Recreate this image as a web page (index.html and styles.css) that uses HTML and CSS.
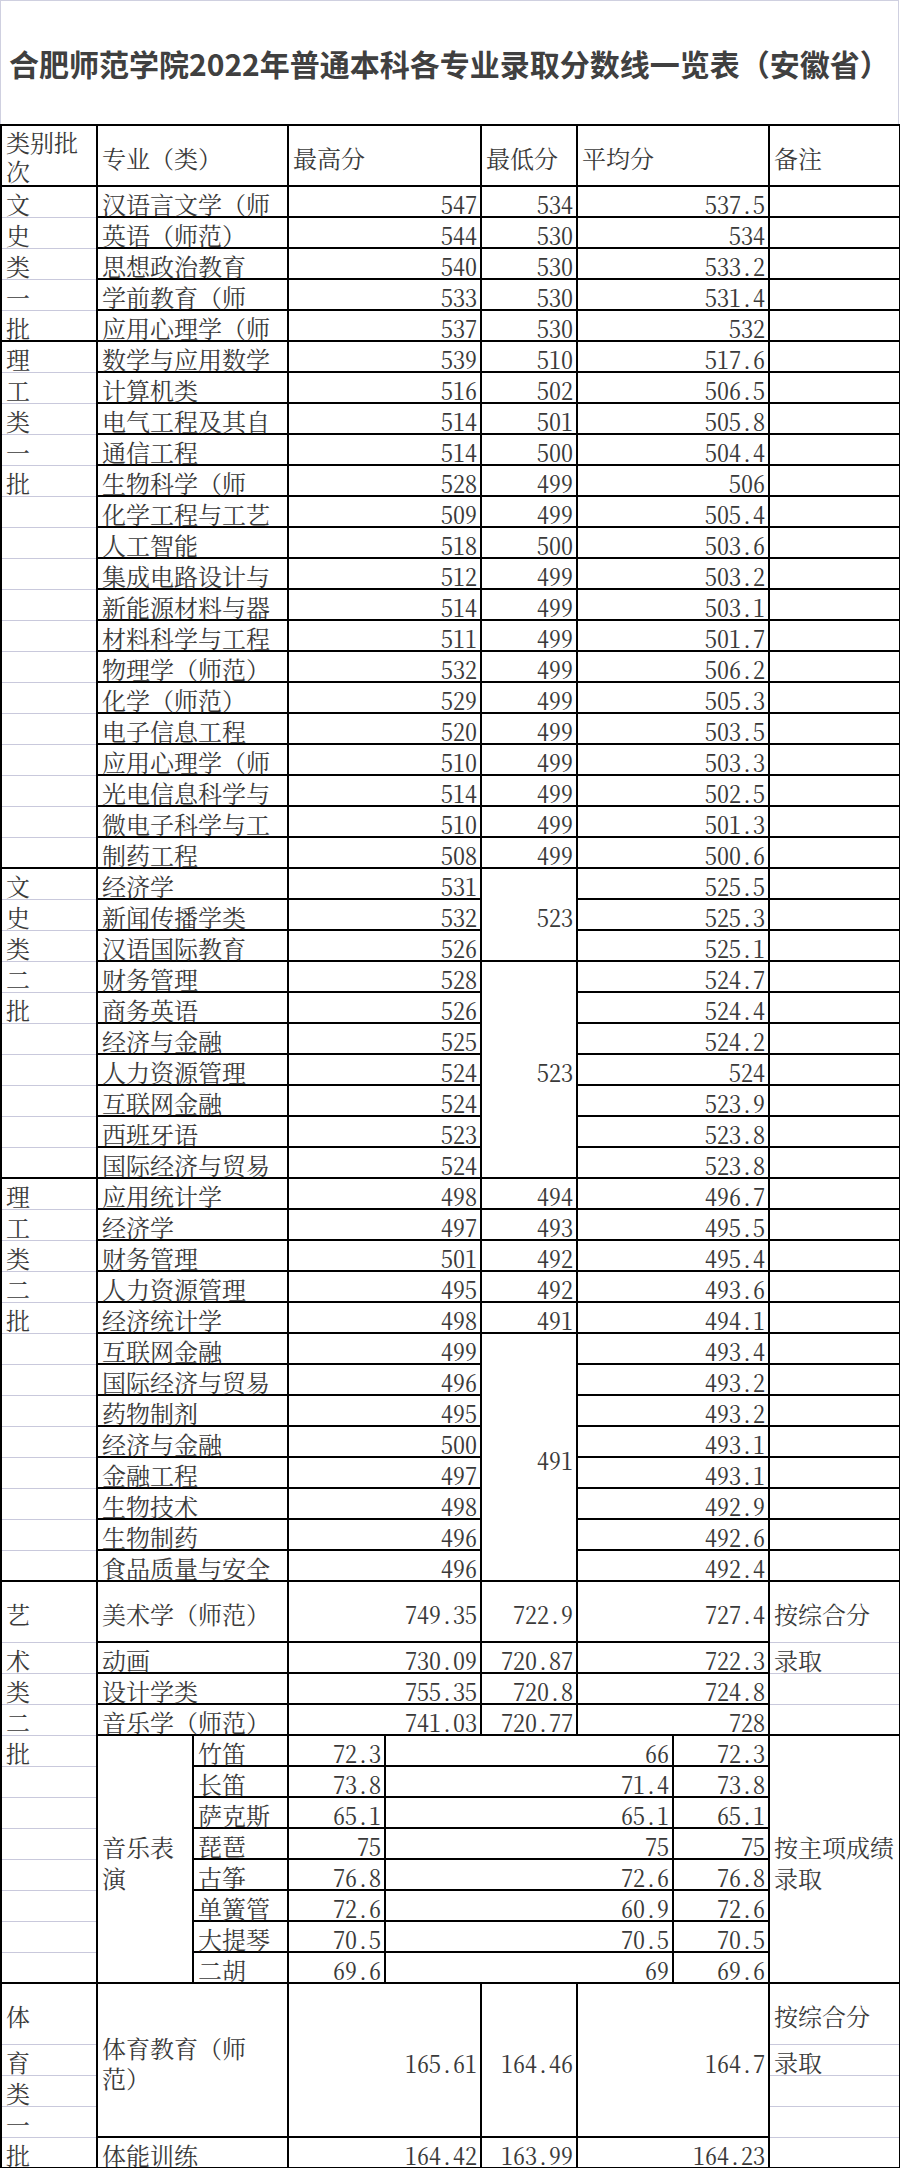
FILE: index.html
```html
<!DOCTYPE html>
<html lang="zh-CN">
<head>
<meta charset="utf-8">
<title>合肥师范学院2022年普通本科各专业录取分数线一览表（安徽省）</title>
<link rel="stylesheet" href="styles.css">
</head>
<body>
<div class="title">合肥师范学院2022年普通本科各专业录取分数线一览表（安徽省）</div>
<table class="sheet">
<colgroup>
<col class="c96"><col class="c96"><col class="c95"><col class="c97"><col class="c96"><col class="c96"><col class="c96"><col class="c96"><col class="c131">
</colgroup>
<tbody>
<tr class="tall head"><td class="wrap2">类别批次</td><td colspan="2">专业（类）</td><td colspan="2">最高分</td><td>最低分</td><td colspan="2">平均分</td><td>备注</td></tr>

<tr><td class="a g">文</td><td colspan="2">汉语言文学（师</td><td colspan="2" class="n">547</td><td class="n">534</td><td colspan="2" class="n">537.5</td><td></td></tr>
<tr><td class="a">史</td><td colspan="2">英语（师范）</td><td colspan="2" class="n">544</td><td class="n">530</td><td colspan="2" class="n">534</td><td></td></tr>
<tr><td class="a">类</td><td colspan="2">思想政治教育</td><td colspan="2" class="n">540</td><td class="n">530</td><td colspan="2" class="n">533.2</td><td></td></tr>
<tr><td class="a">一</td><td colspan="2">学前教育（师</td><td colspan="2" class="n">533</td><td class="n">530</td><td colspan="2" class="n">531.4</td><td></td></tr>
<tr><td class="a">批</td><td colspan="2">应用心理学（师</td><td colspan="2" class="n">537</td><td class="n">530</td><td colspan="2" class="n">532</td><td></td></tr>

<tr><td class="a g">理</td><td colspan="2">数学与应用数学</td><td colspan="2" class="n">539</td><td class="n">510</td><td colspan="2" class="n">517.6</td><td></td></tr>
<tr><td class="a">工</td><td colspan="2">计算机类</td><td colspan="2" class="n">516</td><td class="n">502</td><td colspan="2" class="n">506.5</td><td></td></tr>
<tr><td class="a">类</td><td colspan="2">电气工程及其自</td><td colspan="2" class="n">514</td><td class="n">501</td><td colspan="2" class="n">505.8</td><td></td></tr>
<tr><td class="a">一</td><td colspan="2">通信工程</td><td colspan="2" class="n">514</td><td class="n">500</td><td colspan="2" class="n">504.4</td><td></td></tr>
<tr><td class="a">批</td><td colspan="2">生物科学（师</td><td colspan="2" class="n">528</td><td class="n">499</td><td colspan="2" class="n">506</td><td></td></tr>
<tr><td class="a"></td><td colspan="2">化学工程与工艺</td><td colspan="2" class="n">509</td><td class="n">499</td><td colspan="2" class="n">505.4</td><td></td></tr>
<tr><td class="a"></td><td colspan="2">人工智能</td><td colspan="2" class="n">518</td><td class="n">500</td><td colspan="2" class="n">503.6</td><td></td></tr>
<tr><td class="a"></td><td colspan="2">集成电路设计与</td><td colspan="2" class="n">512</td><td class="n">499</td><td colspan="2" class="n">503.2</td><td></td></tr>
<tr><td class="a"></td><td colspan="2">新能源材料与器</td><td colspan="2" class="n">514</td><td class="n">499</td><td colspan="2" class="n">503.1</td><td></td></tr>
<tr><td class="a"></td><td colspan="2">材料科学与工程</td><td colspan="2" class="n">511</td><td class="n">499</td><td colspan="2" class="n">501.7</td><td></td></tr>
<tr><td class="a"></td><td colspan="2">物理学（师范）</td><td colspan="2" class="n">532</td><td class="n">499</td><td colspan="2" class="n">506.2</td><td></td></tr>
<tr><td class="a"></td><td colspan="2">化学（师范）</td><td colspan="2" class="n">529</td><td class="n">499</td><td colspan="2" class="n">505.3</td><td></td></tr>
<tr><td class="a"></td><td colspan="2">电子信息工程</td><td colspan="2" class="n">520</td><td class="n">499</td><td colspan="2" class="n">503.5</td><td></td></tr>
<tr><td class="a"></td><td colspan="2">应用心理学（师</td><td colspan="2" class="n">510</td><td class="n">499</td><td colspan="2" class="n">503.3</td><td></td></tr>
<tr><td class="a"></td><td colspan="2">光电信息科学与</td><td colspan="2" class="n">514</td><td class="n">499</td><td colspan="2" class="n">502.5</td><td></td></tr>
<tr><td class="a"></td><td colspan="2">微电子科学与工</td><td colspan="2" class="n">510</td><td class="n">499</td><td colspan="2" class="n">501.3</td><td></td></tr>
<tr><td class="a"></td><td colspan="2">制药工程</td><td colspan="2" class="n">508</td><td class="n">499</td><td colspan="2" class="n">500.6</td><td></td></tr>

<tr><td class="a g">文</td><td colspan="2">经济学</td><td colspan="2" class="n">531</td><td rowspan="3" class="n">523</td><td colspan="2" class="n">525.5</td><td></td></tr>
<tr><td class="a">史</td><td colspan="2">新闻传播学类</td><td colspan="2" class="n">532</td><td colspan="2" class="n">525.3</td><td></td></tr>
<tr><td class="a">类</td><td colspan="2">汉语国际教育</td><td colspan="2" class="n">526</td><td colspan="2" class="n">525.1</td><td></td></tr>
<tr><td class="a">二</td><td colspan="2">财务管理</td><td colspan="2" class="n">528</td><td rowspan="7" class="n">523</td><td colspan="2" class="n">524.7</td><td></td></tr>
<tr><td class="a">批</td><td colspan="2">商务英语</td><td colspan="2" class="n">526</td><td colspan="2" class="n">524.4</td><td></td></tr>
<tr><td class="a"></td><td colspan="2">经济与金融</td><td colspan="2" class="n">525</td><td colspan="2" class="n">524.2</td><td></td></tr>
<tr><td class="a"></td><td colspan="2">人力资源管理</td><td colspan="2" class="n">524</td><td colspan="2" class="n">524</td><td></td></tr>
<tr><td class="a"></td><td colspan="2">互联网金融</td><td colspan="2" class="n">524</td><td colspan="2" class="n">523.9</td><td></td></tr>
<tr><td class="a"></td><td colspan="2">西班牙语</td><td colspan="2" class="n">523</td><td colspan="2" class="n">523.8</td><td></td></tr>
<tr><td class="a"></td><td colspan="2">国际经济与贸易</td><td colspan="2" class="n">524</td><td colspan="2" class="n">523.8</td><td></td></tr>

<tr><td class="a g">理</td><td colspan="2">应用统计学</td><td colspan="2" class="n">498</td><td class="n">494</td><td colspan="2" class="n">496.7</td><td></td></tr>
<tr><td class="a">工</td><td colspan="2">经济学</td><td colspan="2" class="n">497</td><td class="n">493</td><td colspan="2" class="n">495.5</td><td></td></tr>
<tr><td class="a">类</td><td colspan="2">财务管理</td><td colspan="2" class="n">501</td><td class="n">492</td><td colspan="2" class="n">495.4</td><td></td></tr>
<tr><td class="a">二</td><td colspan="2">人力资源管理</td><td colspan="2" class="n">495</td><td class="n">492</td><td colspan="2" class="n">493.6</td><td></td></tr>
<tr><td class="a">批</td><td colspan="2">经济统计学</td><td colspan="2" class="n">498</td><td class="n">491</td><td colspan="2" class="n">494.1</td><td></td></tr>
<tr><td class="a"></td><td colspan="2">互联网金融</td><td colspan="2" class="n">499</td><td rowspan="8" class="n">491</td><td colspan="2" class="n">493.4</td><td></td></tr>
<tr><td class="a"></td><td colspan="2">国际经济与贸易</td><td colspan="2" class="n">496</td><td colspan="2" class="n">493.2</td><td></td></tr>
<tr><td class="a"></td><td colspan="2">药物制剂</td><td colspan="2" class="n">495</td><td colspan="2" class="n">493.2</td><td></td></tr>
<tr><td class="a"></td><td colspan="2">经济与金融</td><td colspan="2" class="n">500</td><td colspan="2" class="n">493.1</td><td></td></tr>
<tr><td class="a"></td><td colspan="2">金融工程</td><td colspan="2" class="n">497</td><td colspan="2" class="n">493.1</td><td></td></tr>
<tr><td class="a"></td><td colspan="2">生物技术</td><td colspan="2" class="n">498</td><td colspan="2" class="n">492.9</td><td></td></tr>
<tr><td class="a"></td><td colspan="2">生物制药</td><td colspan="2" class="n">496</td><td colspan="2" class="n">492.6</td><td></td></tr>
<tr><td class="a"></td><td colspan="2">食品质量与安全</td><td colspan="2" class="n">496</td><td colspan="2" class="n">492.4</td><td></td></tr>

<tr class="tall"><td class="a g">艺</td><td colspan="2">美术学（师范）</td><td colspan="2" class="n">749.35</td><td class="n">722.9</td><td colspan="2" class="n">727.4</td><td class="a">按综合分</td></tr>
<tr><td class="a">术</td><td colspan="2">动画</td><td colspan="2" class="n">730.09</td><td class="n">720.87</td><td colspan="2" class="n">722.3</td><td class="a">录取</td></tr>
<tr><td class="a">类</td><td colspan="2">设计学类</td><td colspan="2" class="n">755.35</td><td class="n">720.8</td><td colspan="2" class="n">724.8</td><td class="a"></td></tr>
<tr><td class="a">二</td><td colspan="2">音乐学（师范）</td><td colspan="2" class="n">741.03</td><td class="n">720.77</td><td colspan="2" class="n">728</td><td class="a"></td></tr>
<tr><td class="a">批</td><td rowspan="8" class="wrap">音乐表演</td><td>竹笛</td><td class="n">72.3</td><td colspan="3" class="n">66</td><td class="n">72.3</td><td rowspan="8" class="wrap">按主项成绩录取</td></tr>
<tr><td class="a"></td><td>长笛</td><td class="n">73.8</td><td colspan="3" class="n">71.4</td><td class="n">73.8</td></tr>
<tr><td class="a"></td><td>萨克斯</td><td class="n">65.1</td><td colspan="3" class="n">65.1</td><td class="n">65.1</td></tr>
<tr><td class="a"></td><td>琵琶</td><td class="n">75</td><td colspan="3" class="n">75</td><td class="n">75</td></tr>
<tr><td class="a"></td><td>古筝</td><td class="n">76.8</td><td colspan="3" class="n">72.6</td><td class="n">76.8</td></tr>
<tr><td class="a"></td><td>单簧管</td><td class="n">72.6</td><td colspan="3" class="n">60.9</td><td class="n">72.6</td></tr>
<tr><td class="a"></td><td>大提琴</td><td class="n">70.5</td><td colspan="3" class="n">70.5</td><td class="n">70.5</td></tr>
<tr><td class="a"></td><td>二胡</td><td class="n">69.6</td><td colspan="3" class="n">69</td><td class="n">69.6</td></tr>

<tr class="tall"><td class="a g">体</td><td colspan="2" rowspan="4" class="wrap w30">体育教育（师范）</td><td colspan="2" rowspan="4" class="n">165.61</td><td rowspan="4" class="n">164.46</td><td colspan="2" rowspan="4" class="n">164.7</td><td class="a g">按综合分</td></tr>
<tr><td class="a">育</td><td class="a">录取</td></tr>
<tr><td class="a">类</td><td class="a"></td></tr>
<tr><td class="a">一</td><td class="a"></td></tr>
<tr><td class="a">批</td><td colspan="2">体能训练</td><td colspan="2" class="n">164.42</td><td class="n">163.99</td><td colspan="2" class="n">164.23</td><td class="a"></td></tr>
</tbody>
</table>
</body>
</html>
```

FILE: styles.css
```css
html, body {
  margin: 0;
  padding: 0;
  background: #ffffff;
}

body {
  width: 900px;
}

.title {
  box-sizing: border-box;
  width: 899px;
  height: 124px;
  border: 1px solid #cfd0e0;
  border-bottom: none;
  display: flex;
  align-items: center;
  padding-left: 8px;
  font-family: "Noto Sans CJK SC", "Noto Sans", sans-serif;
  font-weight: 700;
  font-size: 30px;
  color: #404040;
  white-space: nowrap;
  text-spacing-trim: space-all;
}

.sheet {
  border-collapse: collapse;
  table-layout: fixed;
  width: 899px;
  border: 2px solid #000;
  font-family: "Noto Serif CJK SC", "Source Han Serif SC", "Noto Sans CJK SC", serif;
  font-size: 24px;
  color: #3a3a3a;
  text-spacing-trim: space-all;
}

.c95 { width: 95px; }
.c96 { width: 96px; }
.c97 { width: 97px; }
.c131 { width: 131px; }

.sheet tr {
  height: 31px;
}

.sheet tr.tall {
  height: 61px;
}

.sheet td {
  border: 2px solid #000;
  padding: 5px 3px 0 4px;
  line-height: 24px;
  white-space: nowrap;
  vertical-align: middle;
  text-align: left;
}

.sheet td.n {
  text-align: right;
  padding-right: 3px;
  padding-left: 2px;
  font-feature-settings: "hwid";
}

.sheet td.a {
  border-top: 1px solid #c9c9dc;
  border-bottom: 1px solid #c9c9dc;
}

.sheet td.a.g {
  border-top: 2px solid #000;
}

.sheet td.wrap {
  white-space: normal;
  line-height: 31px;
}

.sheet td.w30 {
  line-height: 30px;
}

.sheet .head td.wrap2 {
  white-space: normal;
  line-height: 29px;
  padding-top: 1px;
}
```
